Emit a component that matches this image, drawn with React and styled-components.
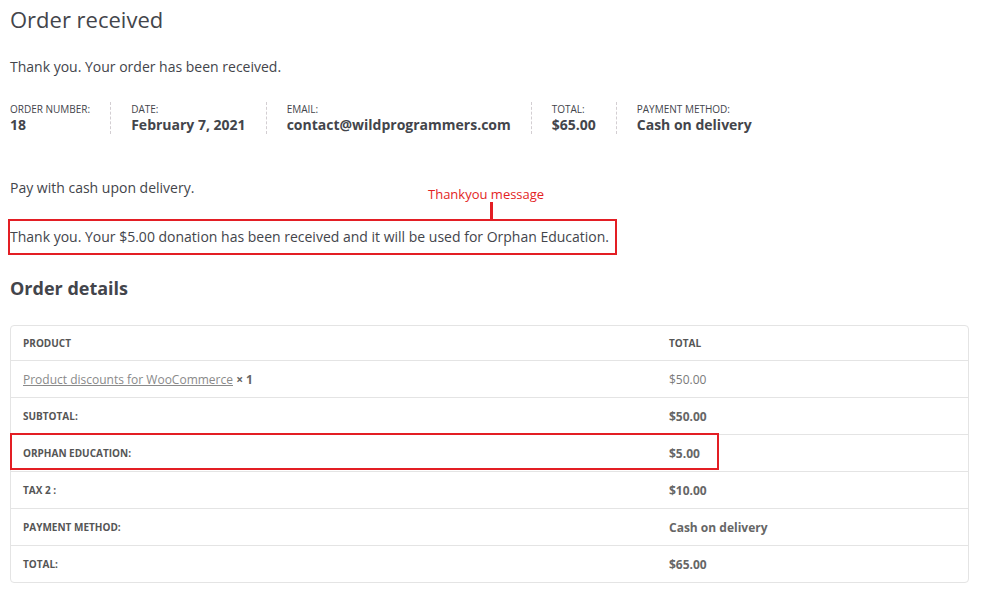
import React from "react";
import styled, { createGlobalStyle } from "styled-components";

const GlobalStyle = createGlobalStyle`
  body {
    margin: 0;
    background: #fff;
    font-family: "Open Sans", "Liberation Sans", sans-serif;
    color: #43454b;
  }
`;

const overview = [
  { label: "Order number:", value: "18" },
  { label: "Date:", value: "February 7, 2021" },
  { label: "Email:", value: "contact@wildprogrammers.com" },
  { label: "Total:", value: "$65.00" },
  { label: "Payment method:", value: "Cash on delivery" },
];

const rows = [
  { label: "Subtotal:", value: "$50.00" },
  { label: "Orphan Education:", value: "$5.00", marked: true },
  { label: "Tax 2 :", value: "$10.00" },
  { label: "Payment method:", value: "Cash on delivery" },
  { label: "Total:", value: "$65.00" },
];

export default function App() {
  return (
    <Page>
      <GlobalStyle />
      <Title>Order received</Title>
      <Notice>Thank you. Your order has been received.</Notice>

      <Overview>
        {overview.map((item) => (
          <OverviewItem key={item.label}>
            <OverviewLabel>{item.label}</OverviewLabel>
            <OverviewValue>{item.value}</OverviewValue>
          </OverviewItem>
        ))}
      </Overview>

      <Paragraph>Pay with cash upon delivery.</Paragraph>

      <Annotated>
        <Callout>
          <CalloutText>Thankyou message</CalloutText>
          <CalloutLine />
        </Callout>
        <Highlight>
          Thank you. Your $5.00 donation has been received and it will be used
          for Orphan Education.
        </Highlight>
      </Annotated>

      <SectionTitle>Order details</SectionTitle>

      <Table>
        <Row>
          <HeadCell>Product</HeadCell>
          <HeadCell>Total</HeadCell>
        </Row>
        <Row>
          <Cell>
            <ProductLink href="#">Product discounts for WooCommerce</ProductLink>{" "}
            <Qty>× 1</Qty>
          </Cell>
          <Cell>$50.00</Cell>
        </Row>
        {rows.map((r) => (
          <Row key={r.label} $marked={r.marked}>
            <LabelCell>{r.label}</LabelCell>
            <ValueCell>{r.value}</ValueCell>
          </Row>
        ))}
      </Table>
    </Page>
  );
}

const Page = styled.div`
  padding: 4px 12px 20px 10px;
`;

const Title = styled.h1`
  margin: 0;
  font-size: 22px;
  font-weight: 400;
  line-height: 30px;
  color: #43454b;
`;

const Notice = styled.p`
  margin: 22px 0 0;
  font-size: 14px;
  line-height: 22px;
`;

const Overview = styled.ul`
  display: flex;
  list-style: none;
  margin: 24px 0 0;
  padding: 0;
`;

const OverviewItem = styled.li`
  display: flex;
  flex-direction: column;
  padding: 0 20px 0 20px;
  border-right: 1px dashed #d3ced2;
  height: 32px;

  &:first-child {
    padding-left: 0;
  }
  &:last-child {
    border-right: none;
  }
`;

const OverviewLabel = styled.span`
  font-size: 10px;
  line-height: 14px;
  text-transform: uppercase;
  color: #43454b;
`;

const OverviewValue = styled.strong`
  font-size: 14px;
  line-height: 18px;
  font-weight: 700;
`;

const Paragraph = styled.p`
  margin: 43px 0 0;
  font-size: 14px;
  line-height: 22px;
`;

const Annotated = styled.div`
  position: relative;
  margin-top: 20px;
`;

const Callout = styled.div`
  position: absolute;
  left: 418px;
  top: -33px;
  display: flex;
  flex-direction: column;
  align-items: center;
`;

const CalloutText = styled.span`
  font-size: 13px;
  line-height: 16px;
  color: #e31e24;
`;

const CalloutLine = styled.span`
  width: 3px;
  height: 17px;
  margin-left: 10px;
  background: #e31e24;
`;

const Highlight = styled.div`
  display: inline-block;
  margin-left: -2px;
  padding: 5px 6px 5px 0;
  border: 2.5px solid #e31e24;
  font-size: 14px;
  line-height: 22px;
`;

const SectionTitle = styled.h2`
  margin: 20px 0 0;
  font-size: 18px;
  font-weight: 700;
  line-height: 26px;
`;

const Table = styled.div`
  margin-top: 24px;
  border: 1px solid #e4e4e4;
  border-radius: 4px;
`;

const Row = styled.div`
  position: relative;
  display: grid;
  grid-template-columns: 646px 1fr;
  height: 36px;
  align-items: center;
  border-top: 1px solid #e4e4e4;

  &:first-child {
    border-top: none;
    height: 34px;
  }

  ${(p) =>
    p.$marked &&
    `
    &::after {
      content: "";
      position: absolute;
      left: -1px;
      top: -2px;
      width: 709px;
      height: 37px;
      border: 2.5px solid #e31e24;
      box-sizing: border-box;
      pointer-events: none;
    }
  `}
`;

const Cell = styled.div`
  padding-left: 12px;
  font-size: 12px;
  color: #7a7a7a;
`;

const HeadCell = styled(Cell)`
  font-size: 10px;
  font-weight: 700;
  text-transform: uppercase;
  color: #555;
`;

const LabelCell = styled(HeadCell)``;

const ValueCell = styled(Cell)`
  font-weight: 700;
  color: #666;
`;

const ProductLink = styled.a`
  color: #8a8a8a;
  text-decoration: underline;
`;

const Qty = styled.strong`
  color: #666;
`;
